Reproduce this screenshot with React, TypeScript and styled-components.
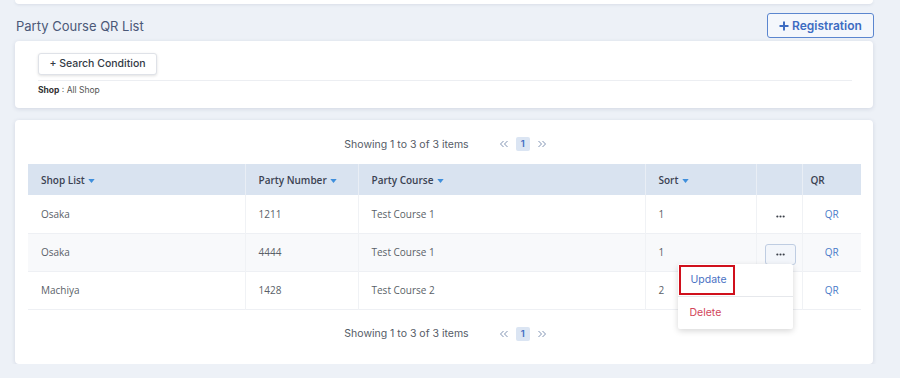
import React from "react";
import styled, { createGlobalStyle } from "styled-components";

const GlobalStyle = createGlobalStyle`
  body {
    margin: 0;
    background: #edf1f7;
    font-family: "Open Sans", "Liberation Sans", sans-serif;
  }
`;

interface Row {
  shop: string;
  number: string;
  course: string;
  sort: string;
}

const rows: Row[] = [
  { shop: "Osaka", number: "1211", course: "Test Course 1", sort: "1" },
  { shop: "Osaka", number: "4444", course: "Test Course 1", sort: "1" },
  { shop: "Machiya", number: "1428", course: "Test Course 2", sort: "2" },
];

const Caret = () => (
  <CaretSvg viewBox="0 0 8 5">
    <path d="M0 0 L8 0 L4 5 Z" fill="#3f8fdc" />
  </CaretSvg>
);

const Dots = () => (
  <DotsSvg viewBox="0 0 10 3">
    <circle cx="1.5" cy="1.5" r="1.2" fill="#3a3f48" />
    <circle cx="5" cy="1.5" r="1.2" fill="#3a3f48" />
    <circle cx="8.5" cy="1.5" r="1.2" fill="#3a3f48" />
  </DotsSvg>
);

const Chevrons = ({ flip }: { flip?: boolean }) => (
  <ChevronSvg viewBox="0 0 10 8" style={flip ? { transform: "scaleX(-1)" } : undefined}>
    <path d="M4.5 1 L1.5 4 L4.5 7 M8.5 1 L5.5 4 L8.5 7" stroke="#8194b4" strokeWidth="1" fill="none" />
  </ChevronSvg>
);

const Pagination = () => (
  <PagerRow>
    <PagerText>Showing 1 to 3 of 3 items</PagerText>
    <PagerControls>
      <Chevrons />
      <PageNumber>1</PageNumber>
      <Chevrons flip />
    </PagerControls>
  </PagerRow>
);

export default function App() {
  return (
    <>
      <GlobalStyle />
      <Page>
        <TopStrip />
        <HeaderBar>
          <Title>Party Course QR List</Title>
          <RegisterButton>
            <PlusIcon viewBox="0 0 10 10">
              <path d="M5 0.5 V9.5 M0.5 5 H9.5" stroke="#3d6cc2" strokeWidth="2" />
            </PlusIcon>
            Registration
          </RegisterButton>
        </HeaderBar>

        <SearchCard>
          <SearchButton>+ Search Condition</SearchButton>
          <Divider />
          <ShopFilter>
            <b>Shop</b> : All Shop
          </ShopFilter>
        </SearchCard>

        <ListCard>
          <Pagination />
          <Table>
            <colgroup>
              <col style={{ width: 217 }} />
              <col style={{ width: 113 }} />
              <col style={{ width: 287 }} />
              <col style={{ width: 111 }} />
              <col style={{ width: 46 }} />
              <col style={{ width: 59 }} />
            </colgroup>
            <thead>
              <tr>
                <Th>
                  Shop List <Caret />
                </Th>
                <Th>
                  Party Number <Caret />
                </Th>
                <Th>
                  Party Course <Caret />
                </Th>
                <Th>
                  Sort <Caret />
                </Th>
                <Th />
                <Th>QR</Th>
              </tr>
            </thead>
            <tbody>
              {rows.map((row, index) => (
                <Tr key={row.number} $striped={index === 1}>
                  <Td>{row.shop}</Td>
                  <Td>{row.number}</Td>
                  <Td>{row.course}</Td>
                  <Td>{row.sort}</Td>
                  <ActionCell>
                    <DotsButton $open={index === 1}>
                      <Dots />
                    </DotsButton>
                    {index === 1 && (
                      <Menu>
                        <MenuItem $danger={false}>
                          <Highlight>Update</Highlight>
                        </MenuItem>
                        <MenuItem $danger>Delete</MenuItem>
                      </Menu>
                    )}
                  </ActionCell>
                  <QrCell>QR</QrCell>
                </Tr>
              ))}
            </tbody>
          </Table>
          <Pagination />
        </ListCard>
      </Page>
    </>
  );
}

const Page = styled.div`
  padding: 0 27px 0 15px;
  font-family: "Inter", "Liberation Sans", sans-serif;
`;

const TopStrip = styled.div`
  height: 4px;
  background: #fff;
  border-radius: 0 0 4px 4px;
  box-shadow: 0 1px 3px rgba(40, 60, 100, 0.1);
`;

const HeaderBar = styled.div`
  display: flex;
  justify-content: space-between;
  align-items: center;
  height: 25px;
  margin-top: 9px;
  margin-bottom: 3px;
`;

const Title = styled.h1`
  margin: 0;
  padding-left: 1px;
  font-size: 13px;
  font-weight: 400;
  color: #4b5878;
`;

const RegisterButton = styled.button`
  display: flex;
  align-items: center;
  gap: 3px;
  height: 25px;
  width: 107px;
  margin-right: -1px;
  justify-content: center;
  border: 1px solid #5b86cf;
  border-radius: 3px;
  background: #f4f7fc;
  color: #3d6cc2;
  font-family: inherit;
  font-size: 12px;
  font-weight: 600;
  padding: 0;
`;

const PlusIcon = styled.svg`
  width: 10px;
  height: 10px;
`;

const Card = styled.div`
  background: #fff;
  border-radius: 4px;
  box-shadow: 0 1px 4px rgba(40, 60, 100, 0.14);
`;

const SearchCard = styled(Card)`
  height: 67px;
  box-sizing: border-box;
  padding: 10px 21px 0 23px;
`;

const SearchButton = styled.button`
  height: 22px;
  width: 119px;
  padding: 0;
  border: 1px solid #dfe2e8;
  border-radius: 3px;
  background: #fff;
  box-shadow: 0 1px 3px rgba(0, 0, 0, 0.12);
  font-family: inherit;
  font-size: 10.5px;
  font-weight: 500;
  color: #333a45;
`;

const Divider = styled.div`
  height: 1px;
  background: #eceef2;
  margin-top: 5px;
`;

const ShopFilter = styled.div`
  margin-top: 4px;
  font-size: 8.5px;
  color: #555;

  b {
    font-weight: 700;
    color: #333;
  }
`;

const ListCard = styled(Card)`
  margin-top: 12px;
  height: 244px;
  box-sizing: border-box;
  padding: 13px 12px 0 13px;
`;

const PagerRow = styled.div`
  display: flex;
  justify-content: center;
  align-items: center;
  gap: 30px;
  height: 22px;
  padding-left: 2px;
  margin-bottom: 9px;

  table + & {
    margin-top: 13px;
  }
`;

const PagerText = styled.span`
  font-size: 10.5px;
  color: #555b66;
`;

const PagerControls = styled.div`
  display: flex;
  align-items: center;
  gap: 7px;
  height: 22px;
`;

const ChevronSvg = styled.svg`
  width: 10px;
  height: 8px;
`;

const PageNumber = styled.span`
  display: inline-block;
  width: 14px;
  height: 14px;
  line-height: 14px;
  text-align: center;
  background: #dbe5f3;
  border-radius: 2px;
  font-size: 9.5px;
  color: #3d6cc2;
  font-weight: 600;
`;

const Table = styled.table`
  width: 833px;
  border-collapse: collapse;
  table-layout: fixed;
  font-family: "Open Sans", "Liberation Sans", sans-serif;
`;

const Th = styled.th`
  height: 31px;
  padding: 0 0 0 13px;
  background: #d9e3f0;
  border-right: 1px solid #e9eef5;
  text-align: left;
  font-size: 10px;
  font-weight: 600;
  color: #3b4252;

  &:last-child {
    border-right: none;
    padding-left: 8px;
  }
`;

const CaretSvg = styled.svg`
  width: 7px;
  height: 4px;
  margin-left: 1px;
  vertical-align: middle;
`;

const Tr = styled.tr<{ $striped: boolean }>`
  height: 38px;
  background: ${(p) => (p.$striped ? "#f8f9fb" : "#fff")};
  border-bottom: 1px solid #eef0f4;
`;

const Td = styled.td`
  padding: 0 0 0 13px;
  border-right: 1px solid #f0f2f5;
  font-size: 10px;
  color: #5a5f68;
`;

const ActionCell = styled.td`
  position: relative;
  text-align: center;
  border-right: 1px solid #f0f2f5;
`;

const DotsButton = styled.button<{ $open: boolean }>`
  display: inline-flex;
  align-items: center;
  justify-content: center;
  width: 31px;
  height: 21px;
  padding: 0;
  border: 1px solid ${(p) => (p.$open ? "#bfcde2" : "transparent")};
  border-radius: 3px;
  background: ${(p) => (p.$open ? "#f3f6fb" : "transparent")};
  margin-left: 2px;
`;

const DotsSvg = styled.svg`
  width: 9px;
  height: 3px;
`;

const Menu = styled.div`
  position: absolute;
  top: 30px;
  right: 9px;
  width: 115px;
  background: #fff;
  box-shadow: 0 2px 6px rgba(0, 0, 0, 0.16);
  border-radius: 2px;
  z-index: 5;
  text-align: left;
`;

const MenuItem = styled.div<{ $danger: boolean }>`
  height: 32px;
  display: flex;
  align-items: center;
  padding-left: 1px;
  font-family: "Inter", "Liberation Sans", sans-serif;
  font-size: 10.5px;
  color: ${(p) => (p.$danger ? "#d2455a" : "#4a72c4")};

  & + & {
    border-top: 1px solid #e6e8ec;
    padding-left: 12px;
  }
`;

const Highlight = styled.span`
  display: flex;
  align-items: center;
  height: 30px;
  width: 56px;
  box-sizing: border-box;
  padding-left: 10px;
  border: 2px solid #d0101c;
`;

const QrCell = styled.td`
  text-align: center;
  font-size: 10px;
  color: #4a7bc9;
`;
